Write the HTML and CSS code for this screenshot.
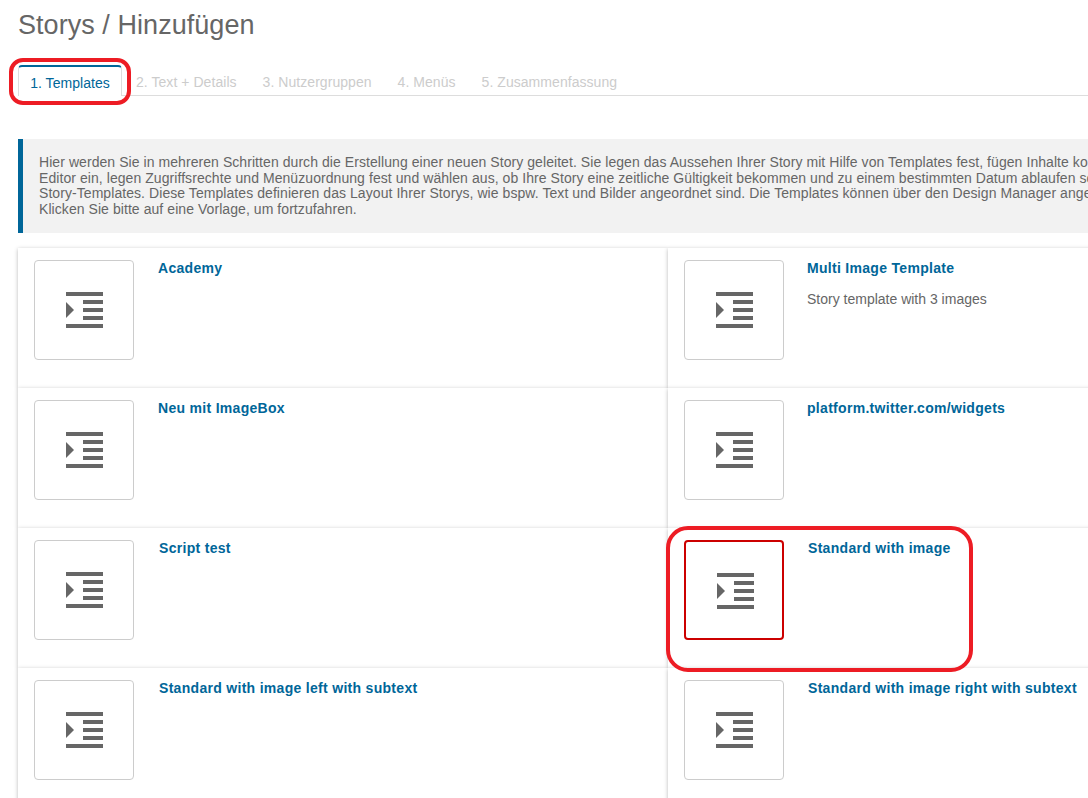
FILE: index.html
```html
<!DOCTYPE html>
<html lang="de">
<head>
<meta charset="utf-8">
<title>Storys / Hinzufügen</title>
<link rel="stylesheet" href="styles.css">
</head>
<body>
<svg class="sprite" width="0" height="0" aria-hidden="true">
  <symbol id="tpl" viewBox="0 0 37 36">
    <path fill="#666" d="M0 0h37v4H0zM17 8h20v4H17zM17 16h20v4H17zM17 24h20v4H17zM0 32h37v4H0zM0 10l8 8-8 8z"/>
  </symbol>
</svg>
<main class="page">
  <h1 class="title">Storys / Hinzufügen</h1>
  <nav class="tabs">
    <a class="tab active">1. Templates</a>
    <a class="tab">2. Text + Details</a>
    <a class="tab">3. Nutzergruppen</a>
    <a class="tab">4. Menüs</a>
    <a class="tab">5. Zusammenfassung</a>
  </nav>
  <div class="intro">
    <p>Hier werden Sie in mehreren Schritten durch die Erstellung einer neuen Story geleitet. Sie legen das Aussehen Ihrer Story mit Hilfe von Templates fest, fügen Inhalte ko<br>
    Editor ein, legen Zugriffsrechte und Menüzuordnung fest und wählen aus, ob Ihre Story eine zeitliche Gültigkeit bekommen und zu einem bestimmten Datum ablaufen so<br>
    Story-Templates. Diese Templates definieren das Layout Ihrer Storys, wie bspw. Text und Bilder angeordnet sind. Die Templates können über den Design Manager ange<br>
    Klicken Sie bitte auf eine Vorlage, um fortzufahren.</p>
  </div>
  <section class="grid">
    <article class="card">
      <div class="thumb"><svg class="icon"><use href="#tpl"/></svg></div>
      <div class="body"><h2>Academy</h2></div>
    </article>
    <article class="card right">
      <div class="thumb"><svg class="icon"><use href="#tpl"/></svg></div>
      <div class="body"><h2>Multi Image Template</h2><p>Story template with 3 images</p></div>
    </article>
    <article class="card">
      <div class="thumb"><svg class="icon"><use href="#tpl"/></svg></div>
      <div class="body"><h2>Neu mit ImageBox</h2></div>
    </article>
    <article class="card right">
      <div class="thumb"><svg class="icon"><use href="#tpl"/></svg></div>
      <div class="body"><h2>platform.twitter.com/widgets</h2></div>
    </article>
    <article class="card">
      <div class="thumb"><svg class="icon"><use href="#tpl"/></svg></div>
      <div class="body shift"><h2>Script test</h2></div>
    </article>
    <article class="card right selected">
      <div class="thumb"><svg class="icon"><use href="#tpl"/></svg></div>
      <div class="body shift"><h2>Standard with image</h2></div>
    </article>
    <article class="card">
      <div class="thumb"><svg class="icon"><use href="#tpl"/></svg></div>
      <div class="body shift"><h2>Standard with image left with subtext</h2></div>
    </article>
    <article class="card right">
      <div class="thumb"><svg class="icon"><use href="#tpl"/></svg></div>
      <div class="body shift"><h2>Standard with image right with subtext</h2></div>
    </article>
  </section>
</main>
<div class="mark mark-tab"></div>
<div class="mark mark-card"></div>
</body>
</html>
```
FILE: styles.css
```css
html, body {
  margin: 0;
  height: 798px;
  overflow: hidden;
  background: #fff;
}
body {
  position: relative;
  width: 1088px;
  font-family: "Liberation Sans", Arial, sans-serif;
  color: #666;
}
.sprite { position: absolute; }
.page {
  width: 1318px;
  padding-left: 18px;
}
.title {
  margin: 0;
  padding-top: 10px;
  font-size: 27px;
  line-height: 30px;
  font-weight: 400;
  letter-spacing: .05px;
  color: #666;
}
.tabs {
  display: flex;
  margin-top: 25px;
  height: 30px;
  border-bottom: 1px solid #ddd;
  font-size: 14px;
  letter-spacing: .05px;
}
.tab {
  box-sizing: border-box;
  height: 31px;
  padding: 9px 13px 0;
  color: #ccc;
  line-height: 17px;
}
.tab.active {
  width: 104px;
  padding: 8px 0 0;
  margin-right: 1px;
  text-align: center;
  color: #069;
  background: #fff;
  border: 1px solid #ddd;
  border-top: 2px solid #069;
  border-bottom: 0;
  border-radius: 4px 4px 0 0;
}
.intro {
  box-sizing: border-box;
  height: 94px;
  margin-top: 43px;
  padding: 16px 16px 0 16px;
  background: #f2f2f2;
  border-left: 5px solid #069;
  font-size: 14px;
  line-height: 15.600px;
  letter-spacing: .065px;
  white-space: nowrap;
  overflow: hidden;
}
.intro p { margin: 0; }
.grid {
  display: grid;
  grid-template-columns: 650px 650px;
  grid-auto-rows: 140px;
  margin-top: 15px;
}
.card {
  display: flex;
  box-sizing: border-box;
  padding: 12px 16px;
  background: #fff;
  box-shadow: 0 1px 4px rgba(0, 0, 0, .28);
}
.thumb {
  display: flex;
  flex: none;
  align-items: center;
  justify-content: center;
  box-sizing: border-box;
  width: 100px;
  height: 100px;
  border: 1px solid #ccc;
  border-radius: 4px;
}
.icon { width: 37px; height: 36px; }
.selected .thumb { border: 2px solid #c00; }
.selected .icon { margin: 2px 0 0 2px; }
.body { padding-left: 24px; }
.body.shift { padding-left: 25px; }
.right .body { padding-left: 23px; }
.right .body.shift { padding-left: 24px; }
.body h2 {
  margin: 0;
  font-size: 14px;
  line-height: 17px;
  font-weight: 700;
  letter-spacing: .3px;
  color: #069;
}
.body p {
  margin: 14px 0 0;
  font-size: 14px;
  line-height: 17px;
}
.mark {
  position: absolute;
  box-sizing: border-box;
  border: 4px solid #ed1c24;
}
.mark-tab {
  left: 9px;
  top: 58px;
  width: 122px;
  height: 47px;
  border-radius: 14px;
}
.mark-card {
  left: 666px;
  top: 526px;
  width: 307px;
  height: 146px;
  border-radius: 22px;
}
```
